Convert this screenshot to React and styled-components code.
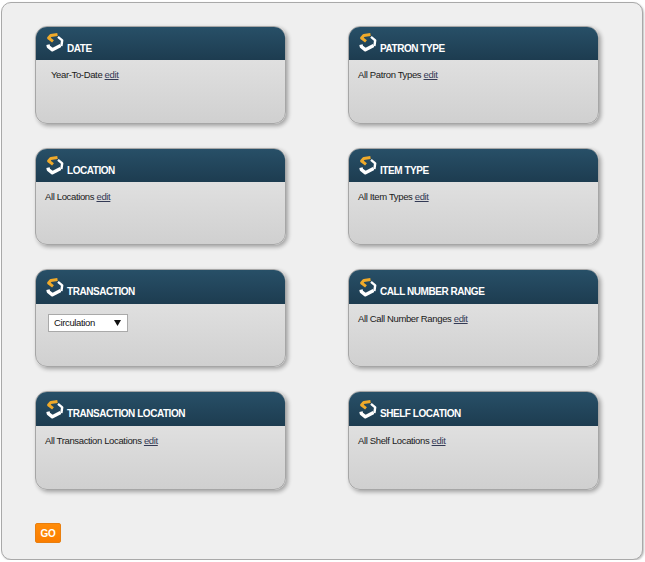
import React from "react";
import styled, { createGlobalStyle } from "styled-components";

const Global = createGlobalStyle`
  html, body { margin: 0; padding: 0; background: #fff; }
  body { font-family: "Liberation Sans", Arial, sans-serif; }
`;

const Page = styled.div`
  box-sizing: border-box;
  width: 642px;
  height: 558px;
  margin: 2px 0 0 1px;
  padding: 23px 43px 0 33px;
  background: #efefef;
  border: 1px solid #a9a9a9;
  border-radius: 10px;
  box-shadow: 1px 1px 2px rgba(0, 0, 0, 0.25);
`;

const Grid = styled.div`
  display: grid;
  grid-template-columns: 251px 251px;
  column-gap: 62px;
  grid-auto-rows: min-content;
  row-gap: 24px;
`;

const Card = styled.section`
  box-sizing: border-box;
  height: ${(p) => p.$h}px;
  border: 1px solid #a6a6a6;
  border-radius: 12px;
  background: linear-gradient(#e8e8e8, #d0d0d0);
  box-shadow: 2px 2px 4px rgba(0, 0, 0, 0.33);
  overflow: hidden;
`;

const Header = styled.header`
  box-sizing: border-box;
  height: ${(p) => p.$h}px;
  display: flex;
  align-items: flex-start;
  margin: -1px -1px 0;
  padding: 0 0 0 10px;
  background: linear-gradient(#285068, #1d3c50);
`;

const LogoMark = styled.svg`
  flex: none;
  margin-top: ${(p) => p.$top}px;
`;

const Title = styled.h2`
  margin: 17px 0 0 2px;
  font-size: 10px;
  letter-spacing: -0.45px;
  line-height: 12px;
  font-weight: 700;
  color: #fff;
  text-transform: uppercase;
`;

const Body = styled.div`
  padding-top: ${(p) => p.$top}px;
  padding-left: ${(p) => p.$left}px;
  font-size: 9.5px;
  letter-spacing: -0.36px;
  line-height: 12px;
  color: #1a1a1a;
`;

const EditLink = styled.a`
  color: #333a55;
  text-decoration: underline;
  cursor: pointer;
`;

const SelectBox = styled.div`
  box-sizing: border-box;
  width: 80px;
  height: 18px;
  display: flex;
  align-items: center;
  justify-content: space-between;
  padding: 0 3px 0 5px;
  background: #fff;
  border: 1px solid #a9a9a9;
  color: #111;
`;

const Caret = styled.svg`
  width: 7px;
  height: 6px;
  margin-right: 3px;
`;

const Footer = styled.div`
  margin-top: 33px;
`;

const GoButton = styled.button`
  display: block;
  box-sizing: border-box;
  width: 26px;
  height: 20px;
  padding: 0;
  border: 1px solid #e87f10;
  border-radius: 2px;
  background: linear-gradient(#ff8c0a, #fb7d00);
  color: #fff;
  font-family: inherit;
  font-size: 10px;
  letter-spacing: -0.2px;
  font-weight: 700;
`;

const Logo = ({ top }) => (
  <LogoMark $top={top} width="20" height="22" viewBox="0 0 20 22" fill="none" aria-hidden="true">
    <path d="M12.5 3.4 L5.8 4.4 L3.6 7 L8 10.4" stroke="#f0aa2a" strokeWidth="3" strokeLinejoin="round" />
    <path d="M13 5.8 L17.2 9.4 L16.4 15" stroke="#fff" strokeWidth="2.4" strokeLinejoin="round" />
    <path d="M3 13.6 L3.4 15.6 L7.4 18.8 L15.6 14.6" stroke="#fff" strokeWidth="3.4" strokeLinejoin="round" />
  </LogoMark>
);

const rows = [
  { h: 98, hh: 34, logo: 5, left: { t: "Date", b: "Year-To-Date", indent: 15 }, right: { t: "Patron Type", b: "All Patron Types" } },
  { h: 97, hh: 34, logo: 6, left: { t: "Location", b: "All Locations" }, right: { t: "Item Type", b: "All Item Types" } },
  { h: 98, hh: 35, logo: 7, left: { t: "Transaction", select: true }, right: { t: "Call Number Range", b: "All Call Number Ranges" } },
  { h: 99, hh: 35, logo: 7, left: { t: "Transaction Location", b: "All Transaction Locations" }, right: { t: "Shelf Location", b: "All Shelf Locations" } },
];

const Filter = ({ h, hh, logo, t, b, indent, select }) => (
  <Card $h={h}>
    <Header $h={hh}>
      <Logo top={logo} />
      <Title>{t}</Title>
    </Header>
    <Body $top={select ? 10 : 9} $left={select ? 12 : indent || 9}>
      {select ? (
        <SelectBox>
          <span>Circulation</span>
          <Caret viewBox="0 0 7 6"><path d="M0 0 H7 L3.5 6 Z" fill="#111" /></Caret>
        </SelectBox>
      ) : (
        <>
          {b} <EditLink>edit</EditLink>
        </>
      )}
    </Body>
  </Card>
);

export default function App() {
  return (
    <>
      <Global />
      <Page>
        <Grid>
          {rows.flatMap(({ left, right, ...r }) => [
            <Filter key={left.t} {...r} {...left} />,
            <Filter key={right.t} {...r} {...right} />,
          ])}
        </Grid>
        <Footer>
          <GoButton>GO</GoButton>
        </Footer>
      </Page>
    </>
  );
}
